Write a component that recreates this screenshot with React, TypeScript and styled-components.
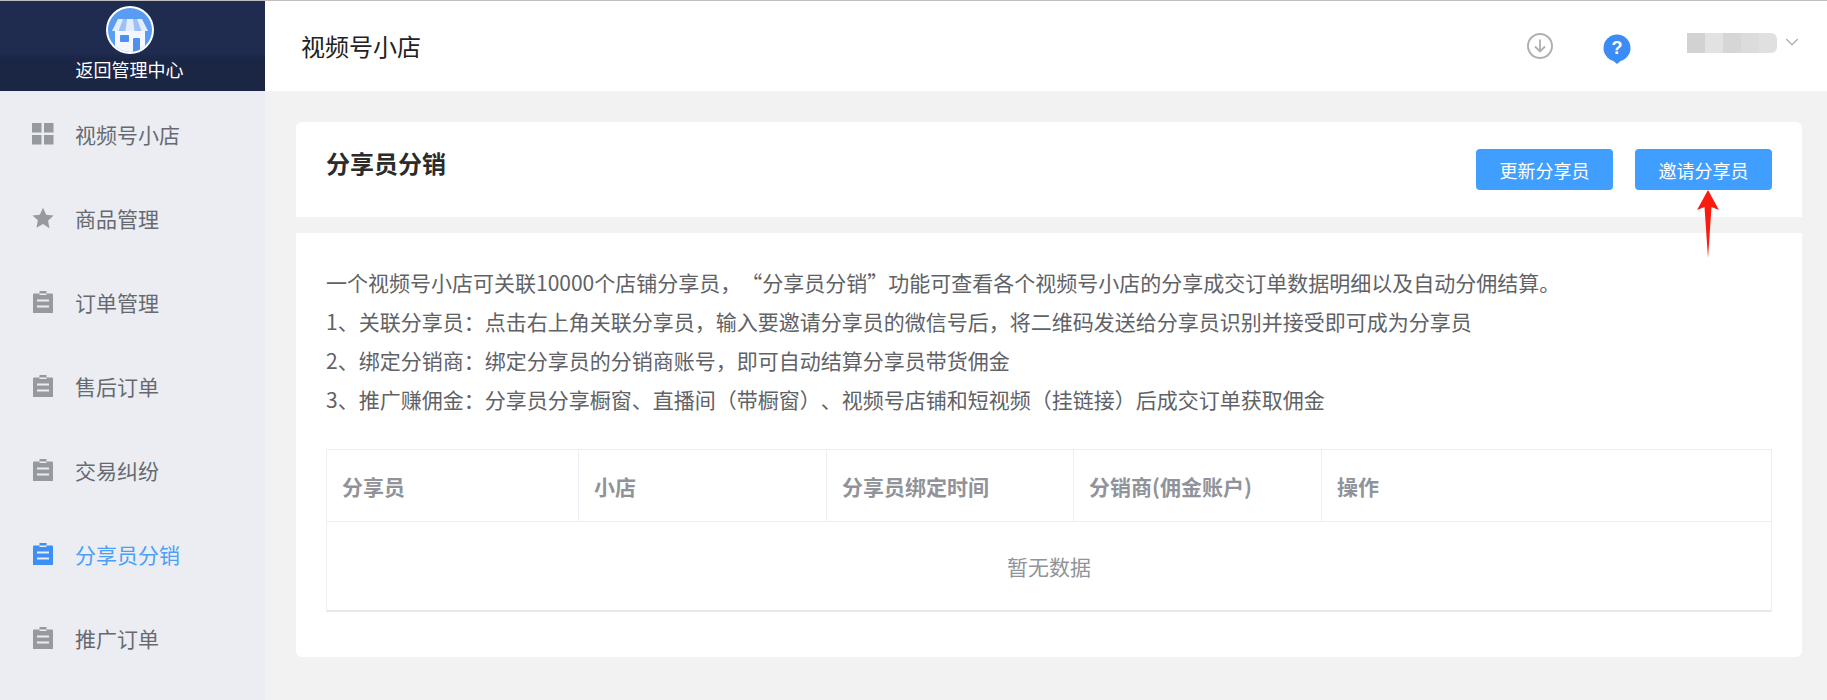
import React from 'react';
import styled, { createGlobalStyle } from 'styled-components';
import { ChevronDown } from 'lucide-react';

const GlobalStyle = createGlobalStyle`
  html, body {
    margin: 0;
    padding: 0;
    background: #f2f2f3;
    overflow: hidden;
  }
  * { box-sizing: border-box; }
  body {
    font-family: "Noto Sans CJK SC", "Liberation Sans", sans-serif;
    text-spacing-trim: space-all;
  }
`;

// --- Layout ---
const Page = styled.div`
  display: flex;
  width: 1827px;
  height: 700px;
  overflow: hidden;
  border-top: 1px solid #bdbdbd;
`;

const Sidebar = styled.aside`
  width: 265px;
  flex: none;
  background: #ebedf2;
  display: flex;
  flex-direction: column;
`;

const BackPanel = styled.div`
  height: 90px;
  background: linear-gradient(#1f2c50 0, #1f2c50 52px, #1b2544 58px, #1b2544 100%);
  color: #fff;
  display: flex;
  flex-direction: column;
  align-items: center;
  padding: 5px 6px 0 0;
  gap: 2px;
`;

const Logo = styled.div`
  width: 48px;
  height: 48px;
  border-radius: 50%;
  background: #fff;
  padding: 2px;
  flex: none;
`;

const BackLabel = styled.div`
  font-size: 18px;
  line-height: 26px;
`;

const MenuList = styled.nav`
  display: flex;
  flex-direction: column;
  padding-top: 1px;
`;

const MenuItem = styled.div<{ $active?: boolean }>`
  height: 84px;
  display: flex;
  align-items: center;
  padding-left: 32px;
  gap: 21px;
  font-size: 21px;
  color: ${p => (p.$active ? '#4b9ff5' : '#666a70')};
`;

const Main = styled.main`
  flex: 1;
  min-width: 0;
  display: flex;
  flex-direction: column;
`;

const TopBar = styled.header`
  height: 90px;
  flex: none;
  background: #fff;
  display: flex;
  align-items: center;
  padding: 0 24px 0 36px;
  font-size: 24px;
  color: #222;
`;

const TopTitle = styled.div`
  flex: 1;
  margin-top: -2px;
`;

const TopIcons = styled.div`
  display: flex;
  align-items: center;
`;

const IconGap = styled.div`
  width: 49px;
`;

const HelpWrap = styled.div`
  display: flex;
  margin-top: 5px;
`;

const UserBlur = styled.div`
  width: 90px;
  height: 20px;
  margin: 0 4px 6px 56px;
  background: linear-gradient(90deg, #d2d2d2 0 20%, #e2e2e2 20% 40%, #d6d6d6 40% 60%, #dcdcdc 60% 80%, #e0e0e0 80% 100%);
  border-radius: 0 6px 6px 0;
`;

const UserCaret = styled(ChevronDown)`
  margin-bottom: 8px;
`;

const Content = styled.div`
  padding: 31px 25px 0 31px;
  display: flex;
  flex-direction: column;
  gap: 16px;
`;

const Card = styled.section`
  background: #fff;
  border-radius: 6px;
`;

const HeaderCard = styled(Card)`
  height: 95px;
  display: flex;
  align-items: flex-start;
  justify-content: space-between;
  padding: 27px 30px 0 30px;
  border-radius: 6px 6px 0 0;
`;

const CardTitle = styled.h2`
  margin: -3px 0 0;
  font-size: 24px;
  line-height: 34px;
  font-weight: 700;
  color: #2b2b2b;
`;

const Buttons = styled.div`
  display: flex;
  gap: 22px;
`;

const Button = styled.button`
  width: 137px;
  height: 41px;
  border: 0;
  border-radius: 4px;
  background: #409eff;
  color: #fff;
  font: inherit;
  font-size: 18px;
  padding: 0;
`;

const ArrowMark = styled.svg`
  position: absolute;
  left: 1696px;
  top: 190px;
`;

const BodyCard = styled(Card)`
  height: 424px;
  padding: 30px 30px 0;
  border-radius: 0 0 6px 6px;
`;

const IntroLine = styled.p`
  margin: 0;
  font-size: 21px;
  line-height: 39px;
  color: #606266;
  white-space: nowrap;
`;

const Table = styled.div`
  margin-top: 30px;
  border: 1px solid #ebeef5;
  border-bottom: 2px solid #e8e8e8;
`;

const HeadRow = styled.div`
  display: grid;
  grid-template-columns: 252px 248px 247px 248px 1fr;
  height: 72px;
  border-bottom: 1px solid #ebeef5;
`;

const HeadCell = styled.div`
  display: flex;
  align-items: center;
  padding-left: 15px;
  font-size: 21px;
  font-weight: 700;
  color: #909399;
  border-right: 1px solid #ebeef5;

  &:last-child {
    border-right: 0;
  }
`;

const EmptyRow = styled.div`
  height: 88px;
  display: flex;
  align-items: center;
  justify-content: center;
  font-size: 21px;
  color: #909399;
`;

// --- Icons ---
const GridIcon = ({ color }: { color: string }) => (
  <svg width="22" height="22" viewBox="0 0 22 22" fill={color}>
    <rect x="0" y="0" width="9.500" height="9.500" />
    <rect x="12" y="0" width="9.500" height="9.500" />
    <rect x="0" y="12" width="9.500" height="9.500" />
    <rect x="12" y="12" width="9.500" height="9.500" />
  </svg>
);

const StarIcon = ({ color }: { color: string }) => (
  <svg width="22" height="22" viewBox="0 0 22 22" fill={color}>
    <path d="M11 .8l3.200 6.900 7.300.9-5.400 5.100 1.400 7.500L11 17l-6.500 3.700 1.400-7.500L.5 8.600l7.300-.9z" />
  </svg>
);

const ClipboardIcon = ({ color }: { color: string }) => (
  <svg width="22" height="22" viewBox="0 0 20 22" fill={color}>
    <path d="M6.500 0h7v2.500H19a1 1 0 0 1 1 1V22H0V3.500a1 1 0 0 1 1-1h5.500z" />
    <rect x="4" y="8.500" width="12" height="2" fill="#ebedf2" />
    <rect x="4" y="14.500" width="12" height="2" fill="#ebedf2" />
    <rect x="6.500" y="2.500" width="7" height="1.500" fill="#ebedf2" />
  </svg>
);

const ShopLogo = () => (
  <svg width="44" height="44" viewBox="0 0 44 44">
    <defs>
      <clipPath id="shop-clip">
        <circle cx="22" cy="22" r="22" />
      </clipPath>
    </defs>
    <g clipPath="url(#shop-clip)">
      <rect width="44" height="44" fill="#5a9cf2" />
      <rect x="7" y="21" width="30" height="23" fill="#f4f7fd" />
      <path d="M10 11h24l6 12H4z" fill="#e4edfc" />
      <path d="M15 11h4l-1.500 12H10.500zM25 11h4l4.500 12h-7z" fill="#9dc0f6" />
      <rect x="12" y="27" width="9" height="7" rx="1" fill="#4f8fee" />
      <rect x="25" y="30" width="7" height="14" rx="1" fill="#4f8fee" />
    </g>
  </svg>
);

const DownloadIcon = () => (
  <svg width="28" height="28" viewBox="0 0 28 28" fill="none" stroke="#b0b0b0" strokeWidth="2">
    <circle cx="14" cy="14" r="12" />
    <path d="M14 7.500v12M9 14.500l5 5 5-5" strokeWidth="1.800" />
  </svg>
);

const HelpIcon = () => (
  <svg width="28" height="30" viewBox="0 0 28 30">
    <circle cx="14" cy="14" r="13.500" fill="#3b8df5" />
    <path d="M10.500 27l3.500 3 3.500-3z" fill="#3b8df5" />
    <text x="14" y="20" textAnchor="middle" fontSize="18" fontWeight="700" fill="#fff" fontFamily="Liberation Sans, sans-serif">?</text>
  </svg>
);

// --- Data ---
const menu = [
  { label: '视频号小店', icon: 'grid' },
  { label: '商品管理', icon: 'star' },
  { label: '订单管理', icon: 'clip' },
  { label: '售后订单', icon: 'clip' },
  { label: '交易纠纷', icon: 'clip' },
  { label: '分享员分销', icon: 'clip', active: true },
  { label: '推广订单', icon: 'clip' },
];

const intro = [
  '一个视频号小店可关联10000个店铺分享员，“分享员分销”功能可查看各个视频号小店的分享成交订单数据明细以及自动分佣结算。',
  '1、关联分享员：点击右上角关联分享员，输入要邀请分享员的微信号后，将二维码发送给分享员识别并接受即可成为分享员',
  '2、绑定分销商：绑定分享员的分销商账号，即可自动结算分享员带货佣金',
  '3、推广赚佣金：分享员分享橱窗、直播间（带橱窗）、视频号店铺和短视频（挂链接）后成交订单获取佣金',
];

const columns = ['分享员', '小店', '分享员绑定时间', '分销商(佣金账户)', '操作'];

export default function App() {
  return (
    <>
      <GlobalStyle />
      <Page>
        <Sidebar>
          <BackPanel>
            <Logo>
              <ShopLogo />
            </Logo>
            <BackLabel>返回管理中心</BackLabel>
          </BackPanel>
          <MenuList>
            {menu.map(item => {
              const color = item.active ? '#3b8ff5' : '#96999f';
              return (
                <MenuItem key={item.label} $active={item.active}>
                  {item.icon === 'grid' && <GridIcon color={color} />}
                  {item.icon === 'star' && <StarIcon color={color} />}
                  {item.icon === 'clip' && <ClipboardIcon color={color} />}
                  <span>{item.label}</span>
                </MenuItem>
              );
            })}
          </MenuList>
        </Sidebar>
        <Main>
          <TopBar>
            <TopTitle>视频号小店</TopTitle>
            <TopIcons>
              <DownloadIcon />
              <IconGap />
              <HelpWrap>
                <HelpIcon />
              </HelpWrap>
              <UserBlur />
              <UserCaret size={22} color="#aaa" strokeWidth={1.2} />
            </TopIcons>
          </TopBar>
          <Content>
            <HeaderCard>
              <CardTitle>分享员分销</CardTitle>
              <Buttons>
                <Button>更新分享员</Button>
                <Button>邀请分享员</Button>
              </Buttons>
            </HeaderCard>
            <BodyCard>
              {intro.map(line => (
                <IntroLine key={line}>{line}</IntroLine>
              ))}
              <Table>
                <HeadRow>
                  {columns.map(c => (
                    <HeadCell key={c}>{c}</HeadCell>
                  ))}
                </HeadRow>
                <EmptyRow>暂无数据</EmptyRow>
              </Table>
            </BodyCard>
          </Content>
        </Main>
        <ArrowMark width="24" height="70" viewBox="0 0 24 70">
          <path d="M12 0L23 20L15.500 17L12 68L8.500 17L1 20Z" fill="#fa1a0e" />
        </ArrowMark>
      </Page>
    </>
  );
}
